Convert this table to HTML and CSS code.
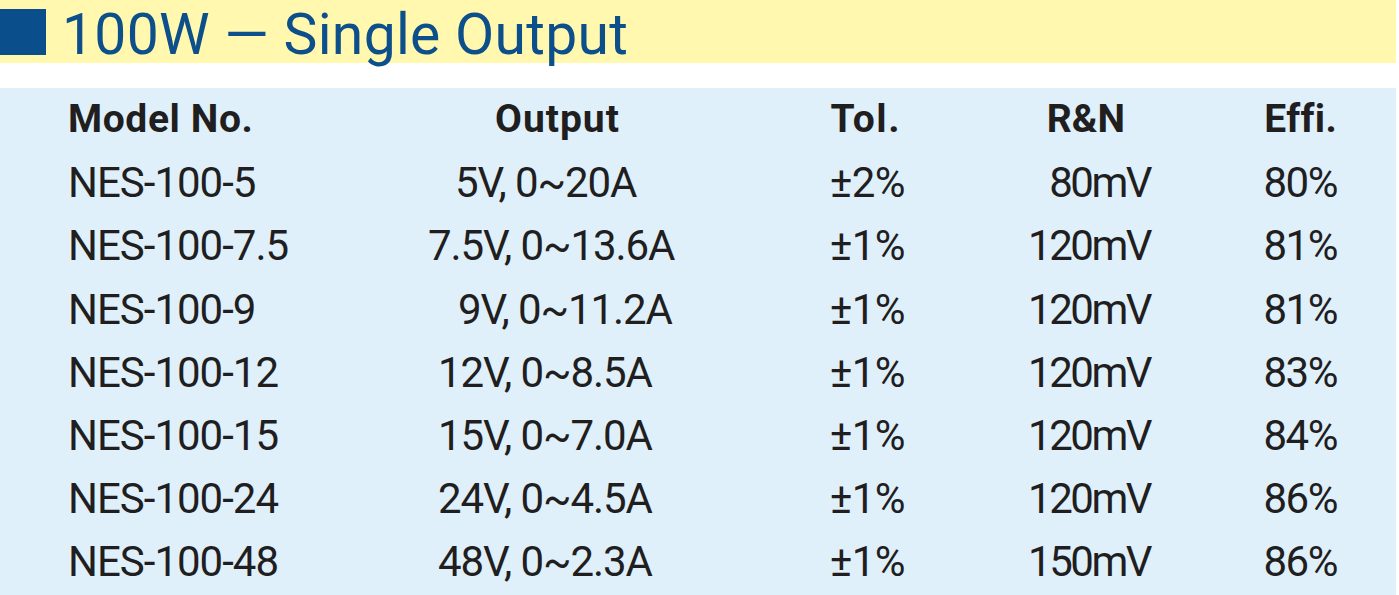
FILE: index.html
```html
<!DOCTYPE html>
<html lang="en">
<head>
<meta charset="utf-8">
<title>100W — Single Output</title>
<link rel="stylesheet" href="styles.css">
</head>
<body>
<header class="band">
  <span class="mark"></span>
  <h1 class="title">100W — Single Output</h1>
</header>
<div class="gap"></div>
<section class="table">
  <div class="row head">
    <div class="c model">Model No.</div>
    <div class="c out">Output</div>
    <div class="c tol">Tol.</div>
    <div class="c rn">R&amp;N</div>
    <div class="c eff">Effi.</div>
  </div>
  <div class="row">
    <div class="c model">NES-100-5</div>
    <div class="c out o-5">5V, 0~20A</div>
    <div class="c tol">±2%</div>
    <div class="c rn">80mV</div>
    <div class="c eff">80%</div>
  </div>
  <div class="row">
    <div class="c model">NES-100-7.5</div>
    <div class="c out o-75">7.5V, 0~13.6A</div>
    <div class="c tol">±1%</div>
    <div class="c rn">120mV</div>
    <div class="c eff">81%</div>
  </div>
  <div class="row">
    <div class="c model">NES-100-9</div>
    <div class="c out o-9">9V, 0~11.2A</div>
    <div class="c tol">±1%</div>
    <div class="c rn">120mV</div>
    <div class="c eff">81%</div>
  </div>
  <div class="row">
    <div class="c model">NES-100-12</div>
    <div class="c out">12V, 0~8.5A</div>
    <div class="c tol">±1%</div>
    <div class="c rn">120mV</div>
    <div class="c eff">83%</div>
  </div>
  <div class="row">
    <div class="c model">NES-100-15</div>
    <div class="c out">15V, 0~7.0A</div>
    <div class="c tol">±1%</div>
    <div class="c rn">120mV</div>
    <div class="c eff">84%</div>
  </div>
  <div class="row">
    <div class="c model">NES-100-24</div>
    <div class="c out">24V, 0~4.5A</div>
    <div class="c tol">±1%</div>
    <div class="c rn">120mV</div>
    <div class="c eff">86%</div>
  </div>
  <div class="row">
    <div class="c model">NES-100-48</div>
    <div class="c out">48V, 0~2.3A</div>
    <div class="c tol">±1%</div>
    <div class="c rn">150mV</div>
    <div class="c eff">86%</div>
  </div>
</section>
</body>
</html>
```
FILE: styles.css
```css
html, body {
  margin: 0;
  padding: 0;
  background: #ffffff;
  overflow: hidden;
}
body {
  width: 1399px;
  height: 595px;
  font-family: Roboto, "Liberation Sans", sans-serif;
  color: #211e1f;
  font-variant-ligatures: none;
}
.band {
  width: 1396px;
  height: 63px;
  background: #fff8ae;
  display: flex;
  align-items: center;
}
.mark {
  width: 46px;
  height: 46px;
  margin-left: 0;
  margin-top: 1px;
  background: #0a4f8b;
  flex: none;
}
.title {
  margin: 0 0 0 16px;
  font-size: 57px;
  line-height: 63px;
  font-weight: normal;
  letter-spacing: 0.3px;
  color: #0c4f8a;
  padding-top: 6px;
}
.gap {
  height: 25px;
}
.table {
  width: 1396px;
  height: 507px;
  background: #e0f0fa;
}
.row {
  display: grid;
  grid-template-columns: 400px 320px 185px 245px 187px;
  height: 63.2px;
  line-height: 63.2px;
  font-size: 42px;
  letter-spacing: -1px;
}
.c {
  white-space: nowrap;
}
.model {
  padding-left: 68px;
}
.out {
  padding-left: 38px;
  letter-spacing: -1.1px;
}
.o-5 { padding-left: 55px; }
.o-75 { padding-left: 28px; }
.o-9 { padding-left: 58px; }
.tol, .rn, .eff {
  text-align: right;
}
.tol { letter-spacing: -0.5px; }
.rn { letter-spacing: -2.5px; }
.eff { letter-spacing: -1.5px; }
.head {
  font-size: 39px;
  font-weight: bold;
}
.head .c {
  letter-spacing: 0.6px;
}
.head .out {
  padding-left: 95px;
  letter-spacing: 1px;
}
.head .tol {
  padding-right: 4px;
  letter-spacing: 1.5px;
}
.head .rn {
  padding-right: 25px;
  letter-spacing: 0;
}
.head .eff {
  letter-spacing: 0.3px;
}
```
